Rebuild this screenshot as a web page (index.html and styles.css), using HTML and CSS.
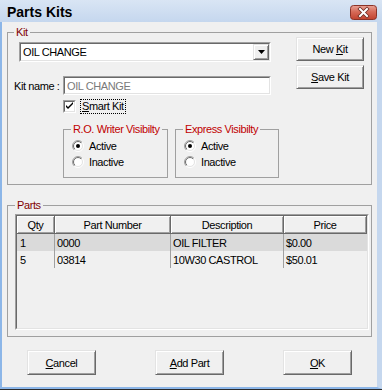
FILE: index.html
```html
<!DOCTYPE html>
<html lang="en">
<head>
    <meta charset="UTF-8">
    <meta name="viewport" content="width=device-width, initial-scale=1.0">
    <title>Parts Kits</title>

    <link rel="stylesheet" href="styles.css">
</head>
<body>

    <div class="window">
        <div class="titlebar">
            <span class="title">Parts Kits</span>
            <span class="close">
                <svg width="27" height="15" viewBox="0 0 27 15">
                    <defs>
                        <linearGradient id="closeFill" x1="0" y1="0" x2="0" y2="1">
                            <stop offset="0" stop-color="#e9a397"/>
                            <stop offset="0.45" stop-color="#d66a58"/>
                            <stop offset="1" stop-color="#c2422e"/>
                        </linearGradient>
                    </defs>
                    <rect x="0.5" y="0.5" width="26" height="14" rx="3" fill="url(#closeFill)" stroke="#8b3328"/>
                    <path d="M10 4 L17 11 M17 4 L10 11" stroke="#6b2a22" stroke-width="3.6" stroke-linecap="square"/>
                    <path d="M10 4 L17 11 M17 4 L10 11" stroke="#fff" stroke-width="2" stroke-linecap="square"/>
                </svg>
            </span>
        </div>

        <div class="client">
            <fieldset class="group kit">
                <legend>Kit</legend>
                <div class="kit-body">
                    <div class="kit-fields">
                        <div class="combo">
                            <div class="combo-inner">
                                <span class="combo-text">OIL CHANGE</span>
                                <span class="combo-btn">
                                    <svg width="7" height="4" viewBox="0 0 7 4"><path d="M0 0 H7 L3.5 4 Z" fill="#000"/></svg>
                                </span>
                            </div>
                        </div>

                        <div class="name-row">
                            <span class="name-label">Kit name :</span>
                            <div class="textbox"><span>OIL CHANGE</span></div>
                        </div>

                        <div class="check-row">
                            <span class="checkbox">
                                <span class="checkbox-inner">
                                    <svg width="9" height="9" viewBox="0 0 9 9"><path d="M1 3 L1 5 L3 7 L8 2 L8 0 L3 5 Z" fill="#000"/></svg>
                                </span>
                            </span>
                            <span class="check-label"><u>S</u>mart Kit</span>
                        </div>

                        <div class="vis-row">
                            <fieldset class="group vis">
                                <legend>R.O. Writer Visibilty</legend>
                                <div class="radio">
                                    <svg class="radio-dot" width="12" height="12" viewBox="0 0 12 12">
                                        <defs>
                                            <linearGradient id="ringOuter" x1="0" y1="0" x2="1" y2="1">
                                                <stop offset="0.5" stop-color="#a0a0a0"/>
                                                <stop offset="0.5" stop-color="#fff"/>
                                            </linearGradient>
                                            <linearGradient id="ringInner" x1="0" y1="0" x2="1" y2="1">
                                                <stop offset="0.5" stop-color="#696969"/>
                                                <stop offset="0.5" stop-color="#e3e3e3"/>
                                            </linearGradient>
                                        </defs>
                                        <circle cx="6" cy="6" r="5.5" fill="none" stroke="url(#ringOuter)"/>
                                        <circle cx="6" cy="6" r="4.5" fill="#fff" stroke="url(#ringInner)"/>
                                        <circle cx="6" cy="6" r="2" fill="#000"/>
                                    </svg>
                                    Active
                                </div>
                                <div class="radio">
                                    <svg class="radio-dot" width="12" height="12" viewBox="0 0 12 12">
                                        <circle cx="6" cy="6" r="5.5" fill="none" stroke="url(#ringOuter)"/>
                                        <circle cx="6" cy="6" r="4.5" fill="#fff" stroke="url(#ringInner)"/>
                                    </svg>
                                    Inactive
                                </div>
                            </fieldset>

                            <fieldset class="group vis">
                                <legend>Express Visibilty</legend>
                                <div class="radio">
                                    <svg class="radio-dot" width="12" height="12" viewBox="0 0 12 12">
                                        <circle cx="6" cy="6" r="5.5" fill="none" stroke="url(#ringOuter)"/>
                                        <circle cx="6" cy="6" r="4.5" fill="#fff" stroke="url(#ringInner)"/>
                                        <circle cx="6" cy="6" r="2" fill="#000"/>
                                    </svg>
                                    Active
                                </div>
                                <div class="radio">
                                    <svg class="radio-dot" width="12" height="12" viewBox="0 0 12 12">
                                        <circle cx="6" cy="6" r="5.5" fill="none" stroke="url(#ringOuter)"/>
                                        <circle cx="6" cy="6" r="4.5" fill="#fff" stroke="url(#ringInner)"/>
                                    </svg>
                                    Inactive
                                </div>
                            </fieldset>
                        </div>
                    </div>

                    <div class="kit-buttons">
                        <button class="btn">New <u>K</u>it</button>
                        <button class="btn"><u>S</u>ave Kit</button>
                    </div>
                </div>
            </fieldset>

            <fieldset class="group parts">
                <legend>Parts</legend>
                <div class="list">
                    <div class="list-inner">
                        <table class="grid">
                            <colgroup>
                                <col class="col-qty">
                                <col class="col-part">
                                <col class="col-desc">
                                <col class="col-price">
                            </colgroup>
                            <thead>
                                <tr>
                                    <th>Qty</th>
                                    <th>Part Number</th>
                                    <th>Description</th>
                                    <th>Price</th>
                                </tr>
                            </thead>
                            <tbody>
                                <tr class="selected">
                                    <td class="qty">1</td>
                                    <td>0000</td>
                                    <td>OIL FILTER</td>
                                    <td>$0.00</td>
                                </tr>
                                <tr>
                                    <td class="qty">5</td>
                                    <td>03814</td>
                                    <td>10W30 CASTROL</td>
                                    <td>$50.01</td>
                                </tr>
                            </tbody>
                        </table>
                    </div>
                </div>
            </fieldset>

            <div class="actions">
                <button class="btn wide"><u>C</u>ancel</button>
                <button class="btn wide"><u>A</u>dd Part</button>
                <button class="btn wide"><u>O</u>K</button>
            </div>
        </div>
    </div>

</body>
</html>
```

FILE: styles.css
```css
* {
    box-sizing: border-box;
}

body {
    margin: 0;
    background-color: #f0f0f0;
    font-family: "Liberation Sans", Arial, sans-serif;
    font-size: 11px;
    letter-spacing: -0.4px;
    color: #000;
}

.window {
    width: 382px;
    height: 390px;
    display: flex;
    flex-direction: column;
    border-bottom: 1px solid #2b2b2b;
}

/* title bar */

.titlebar {
    height: 22px;
    flex-shrink: 0;
    display: flex;
    align-items: center;
    justify-content: space-between;
    padding: 2px 5px 0 7px;
    background: linear-gradient(#d9e5f4, #c5d7ee);
}

.title {
    font-size: 14px;
    font-weight: bold;
    letter-spacing: 0;
}

.close {
    display: flex;
}

/* client area */

.client {
    flex: 1;
    display: flex;
    flex-direction: column;
    background-color: #f0f0f0;
    border-style: solid;
    border-color: #8cb6e8;
    border-right-color: #c5d7ee;
    border-width: 0 5px 2px 2px;
    padding: 4px 5px 0 5px;
}

.group {
    margin: 0;
    min-width: 0;
    border: 1px solid #a0a0a0;
}

.group legend {
    padding: 0 2px;
    line-height: 13px;
    color: #800000;
    white-space: nowrap;
}

.kit {
    width: 365px;
    padding: 3px 7px 6px 6px;
}

.kit-body {
    display: flex;
    justify-content: space-between;
}

.kit-fields {
    display: flex;
    flex-direction: column;
}

/* combo box */

.combo {
    margin-left: 5px;
    width: 252px;
    height: 20px;
    border: 1px solid;
    border-color: #a0a0a0 #fff #fff #a0a0a0;
    background-color: #fff;
}

.combo-inner {
    height: 100%;
    display: flex;
    border: 1px solid;
    border-color: #696969 #e3e3e3 #e3e3e3 #696969;
}

.combo-text {
    flex: 1;
    padding: 1px 0 0 2px;
    line-height: 15px;
}

.combo-btn {
    width: 16px;
    height: 16px;
    display: flex;
    align-items: center;
    justify-content: center;
    background-color: #f0f0f0;
    border: 1px solid;
    border-color: #e3e3e3 #696969 #696969 #e3e3e3;
    box-shadow: inset 1px 1px 0 #fff, inset -1px -1px 0 #a0a0a0;
}

/* kit name */

.name-row {
    margin-top: 14px;
    display: flex;
    align-items: center;
}

.name-label {
    width: 49px;
}

.textbox {
    width: 208px;
    height: 19px;
    border: 1px solid;
    border-color: #a0a0a0 #fff #fff #a0a0a0;
    background-color: #fff;
}

.textbox span {
    display: block;
    height: 100%;
    padding: 1px 0 0 2px;
    line-height: 15px;
    color: #7a7a7a;
    border: 1px solid;
    border-color: #696969 #e3e3e3 #e3e3e3 #696969;
}

/* smart kit */

.check-row {
    margin-top: 4px;
    margin-left: 49px;
    height: 15px;
    display: flex;
    align-items: center;
    gap: 4px;
}

.checkbox {
    width: 13px;
    height: 13px;
    border: 1px solid;
    border-color: #a0a0a0 #fff #fff #a0a0a0;
}

.checkbox-inner {
    display: flex;
    align-items: center;
    justify-content: center;
    width: 100%;
    height: 100%;
    background-color: #fff;
    border: 1px solid;
    border-color: #696969 #e3e3e3 #e3e3e3 #696969;
}

.check-label {
    height: 15px;
    line-height: 13px;
    padding: 0 1px;
    border: 1px dotted #000;
}

/* visibility groups */

.vis-row {
    margin-top: 9px;
    margin-left: 49px;
    display: flex;
    gap: 7px;
}

.vis {
    width: 105px;
    padding: 2px 2px 7px 7px;
}

.vis + .vis {
    width: 104px;
}

.vis legend {
    color: #c00000;
}

.radio {
    height: 16px;
    display: flex;
    align-items: center;
    gap: 5px;
    padding-left: 1px;
}

/* buttons */

.kit-buttons {
    margin-top: -5px;
    display: flex;
    flex-direction: column;
    gap: 4px;
}

.btn {
    width: 68px;
    height: 24px;
    padding: 0;
    font-family: inherit;
    font-size: 11px;
    letter-spacing: -0.4px;
    color: #000;
    background-color: #f0f0f0;
    border: 1px solid;
    border-color: #e3e3e3 #696969 #696969 #e3e3e3;
    box-shadow: inset 1px 1px 0 #fff, inset -1px -1px 0 #a0a0a0;
}

.btn.wide {
    width: 69px;
    height: 25px;
}

/* parts list */

.parts {
    width: 365px;
    margin-top: 14px;
    padding: 2px 2px 6px 7px;
}

.list {
    height: 116px;
    border: 1px solid;
    border-color: #a0a0a0 #fff #fff #a0a0a0;
}

.list-inner {
    height: 100%;
    border: 1px solid;
    border-color: #696969 #e3e3e3 #e3e3e3 #696969;
    background-color: #f0f0f0;
}

.grid {
    width: 350px;
    table-layout: fixed;
    border-collapse: separate;
    border-spacing: 0;
}

.col-qty {
    width: 38px;
}

.col-part {
    width: 116px;
}

.col-desc {
    width: 113px;
}

.col-price {
    width: 83px;
}

.grid th {
    height: 18px;
    padding: 0;
    font-weight: normal;
    text-align: center;
    border-right: 1px solid #696969;
    border-bottom: 1px solid #696969;
    box-shadow: inset 1px 1px 0 #fff, inset -1px -1px 0 #a0a0a0;
}

.grid td {
    height: 17px;
    padding: 0 0 0 2px;
    white-space: nowrap;
    border-right: 1px solid #a0a0a0;
}

.grid td:last-child {
    border-right: none;
}

.grid td.qty {
    padding-left: 3px;
}

.grid tr.selected td {
    background-color: #dadada;
}

/* bottom actions */

.actions {
    margin-top: 13px;
    padding-left: 20px;
    display: flex;
    gap: 59px;
}
```
